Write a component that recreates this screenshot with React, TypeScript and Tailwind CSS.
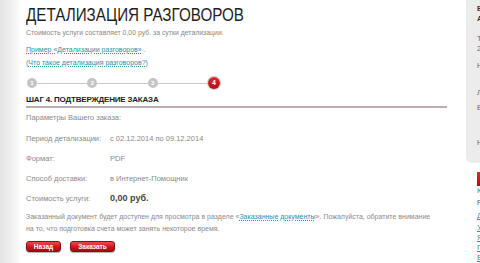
import React from "react";

const font = { fontFamily: '"Liberation Sans", Arial, sans-serif' };

function Step({ n, active }: { n: number; active?: boolean }) {
  if (active)
    return (
      <div className="w-[12px] h-[12px] rounded-full bg-gradient-to-b from-[#e8242c] to-[#b00c12] text-white text-[7px] font-bold leading-[12px] text-center shadow-[0_0_0_1px_#d9c9c9]">
        {n}
      </div>
    );
  return (
    <div className="w-[10px] h-[10px] rounded-full bg-[#c4c4c4] text-white text-[6px] font-bold leading-[10px] text-center">
      {n}
    </div>
  );
}

function Row({ label, value, bold }: { label: string; value: string; bold?: boolean }) {
  return (
    <div className="flex h-[20px] items-center">
      <div className="w-[84px] text-[7.5px] text-[#8a8a8a]">{label}</div>
      {bold ? (
        <div className="text-[9px] font-bold text-[#444]">{value}</div>
      ) : (
        <div className="text-[7.5px] text-[#8a8a8a]">{value}</div>
      )}
    </div>
  );
}

export default function App() {
  return (
    <div className="flex w-[480px] h-[263px] overflow-hidden bg-white" style={font}>
      <div className="w-[22px] shrink-0 bg-gradient-to-r from-[#e4e4e4] via-[#efefef] to-white" />
      <div className="flex-1 pl-[4px] flex flex-col">
        <div className="h-[28px] pt-[2px] leading-[26px] text-[19px] text-[#1e1e1e] whitespace-nowrap origin-left scale-x-[0.8]">
          ДЕТАЛИЗАЦИЯ РАЗГОВОРОВ
        </div>
        <div className="h-[10px] leading-[10px] text-[6.9px] text-[#888] whitespace-nowrap">
          Стоимость услуги составляет 0,00 руб. за сутки детализации.
        </div>
        <div className="mt-[7px] h-[10px] leading-[10px] text-[7px] text-[#888] whitespace-nowrap">
          <span className="text-[#2e8ea6] underline decoration-dotted underline-offset-1">Пример «Детализации разговоров»</span> .
        </div>
        <div className="mt-[3px] h-[10px] leading-[10px] text-[7px] text-[#2e8ea6] whitespace-nowrap">
          (<span className="underline decoration-dotted underline-offset-1">Что такое детализация разговоров?</span>)
        </div>
        <div className="mt-[8px] h-[14px] flex items-center w-[194px] pl-[1px]">
          <Step n={1} />
          <div className="flex-1 h-[1px] bg-[#c8c8c8]" />
          <Step n={2} />
          <div className="flex-1 h-[1px] bg-[#c8c8c8]" />
          <Step n={3} />
          <div className="flex-1 h-[1px] bg-[#c8c8c8]" />
          <Step n={4} active />
        </div>
        <div className="mt-[5px] h-[10px] leading-[10px] text-[8px] font-bold text-[#222] whitespace-nowrap tracking-[-0.2px]">
          ШАГ 4. ПОДТВЕРЖДЕНИЕ ЗАКАЗА
        </div>
        <div className="mt-[1px] h-[2px] w-[421px] bg-[#bcaeae]" />
        <div className="mt-[5px] h-[10px] leading-[10px] text-[7.5px] text-[#8a8a8a]">Параметры Вашего заказа:</div>
        <div className="mt-[6px] flex flex-col">
          <Row label="Период детализации:" value="с 02.12.2014 по 09.12.2014" />
          <Row label="Формат:" value="PDF" />
          <Row label="Способ доставки:" value="в Интернет-Помощник" />
          <Row label="Стоимость услуги:" value="0,00 руб." bold />
        </div>
        <div className="mt-[2px] leading-[12px] text-[7px] text-[#8a8a8a] whitespace-nowrap">
          Заказанный документ будет доступен для просмотра в разделе «
          <span className="text-[#2e8ea6] underline decoration-dotted underline-offset-1">Заказанные документы</span>». Пожалуйста, обратите внимание
          <br />
          на то, что подготовка счета может занять некоторое время.
        </div>
        <div className="mt-[6px] flex gap-[9px]">
          <button className="w-[35px] h-[11px] rounded-[3px] bg-gradient-to-b from-[#ea4a50] via-[#cc1a21] to-[#a80b10] border border-[#8c0a0e] text-white text-[6.5px] font-bold leading-[9px] shadow-[0_1px_1px_rgba(0,0,0,0.3)]">
            Назад
          </button>
          <button className="w-[45px] h-[11px] rounded-[3px] bg-gradient-to-b from-[#ea4a50] via-[#cc1a21] to-[#a80b10] border border-[#8c0a0e] text-white text-[6.5px] font-bold leading-[9px] shadow-[0_1px_1px_rgba(0,0,0,0.3)]">
            Заказать
          </button>
        </div>
      </div>
      <div className="w-[14px] shrink-0 overflow-hidden flex flex-col">
        <div className="h-[163px] bg-[#ececec] rounded-bl-[6px] pl-[11px] pt-[4px] w-[14px]">
          <div className="w-[200px] text-[7.5px] leading-[10px] text-[#333] font-bold">Баланс</div>
          <div className="w-[200px] text-[7.5px] leading-[10px] text-[#333] font-bold">Абонент</div>
          <div className="mt-[10px] w-[200px] text-[7.5px] leading-[10px] text-[#666]">Тариф</div>
          <div className="w-[200px] text-[7.5px] leading-[10px] text-[#666]">2014</div>
          <div className="mt-[7px] w-[200px] text-[7.5px] leading-[10px] text-[#666]">Номер</div>
          <div className="mt-[17px] w-[200px] text-[7.5px] leading-[10px] text-[#666]">Лицевой</div>
          <div className="mt-[5px] w-[200px] text-[7.5px] leading-[10px] text-[#666]">Ваш</div>
          <div className="mt-[25px] w-[200px] text-[7.5px] leading-[10px] text-[#666]">Номер</div>
        </div>
        <div className="pl-[11px] mt-[9px] flex flex-col">
          <div className="w-[10px] h-[14px] bg-gradient-to-b from-[#e4262d] to-[#b50b12]" />
          <div className="w-[200px] text-[7.5px] leading-[9px] text-[#2e8ea6]">Кабинет</div>
          <div className="mt-[3px] w-[200px] text-[7.5px] leading-[10px] text-[#555]">Разделы</div>
          <div className="mt-[3px] w-[200px] text-[7.5px] leading-[10px] text-[#2e8ea6] underline">Детализация</div>
          <div className="mt-[2px] w-[200px] text-[7.5px] leading-[10px] text-[#2e8ea6] underline">Услуги</div>
          <div className="w-[200px] text-[7.5px] leading-[10px] text-[#2e8ea6] underline">Ярлык</div>
          <div className="w-[200px] text-[7.5px] leading-[10px] text-[#2e8ea6] underline">Платежи</div>
          <div className="w-[200px] text-[7.5px] leading-[10px] text-[#2e8ea6] underline">Ваш</div>
        </div>
      </div>
    </div>
  );
}
